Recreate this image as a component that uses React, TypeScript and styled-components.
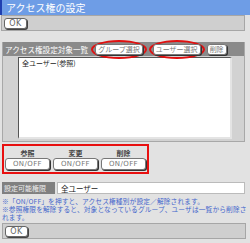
import * as React from 'react';
import styled, { createGlobalStyle } from 'styled-components';

const GlobalStyle = createGlobalStyle`
  *, *::before, *::after {
    box-sizing: border-box;
  }
  html, body {
    margin: 0;
    padding: 0;
    background: #e2e2e2;
  }
  body {
    font-family: "Noto Sans CJK JP", "Noto Sans", sans-serif;
    color: #222;
  }
`;

const Page = styled.div`
  width: 250px;
  height: 243px;
  overflow: hidden;
  display: flex;
  flex-direction: column;
`;

const TitleBar = styled.div`
  height: 15px;
  flex: none;
  display: flex;
  align-items: center;
  padding-left: 4px;
  background: #6e9de6;
  border-left: 2px solid #1f3fb0;
  color: #fff;
  font-size: 10px;
  line-height: 15px;
`;

const ButtonBar = styled.div<{ $top?: number; $left?: number }>`
  width: 244px;
  flex: none;
  margin-left: ${(p) => p.$left ?? 1}px;
  margin-top: ${(p) => p.$top ?? 0}px;
  height: 16px;
  display: flex;
  align-items: center;
  padding-left: 2px;
  background: #cfcfcf;
  border: 1px solid #a6a6a6;
`;

const OkButton = styled.button`
  width: 23px;
  height: 11px;
  padding: 0;
  background: #fff;
  border: 1px solid #666;
  border-radius: 3px;
  box-shadow: 1px 1px 0 #444;
  font-family: "DejaVu Sans", sans-serif;
  font-size: 8px;
  line-height: 9px;
  letter-spacing: 0.5px;
  color: #666;
`;

const Panel = styled.div`
  width: 243px;
  flex: none;
  margin: 11px 0 0 2px;
  padding-bottom: 2px;
  background: #d2d2d2;
  border-left: 1px solid #a8a8a8;
  border-right: 1px solid #a8a8a8;
  border-bottom: 1px solid #a8a8a8;
`;

const PanelHeader = styled.div`
  height: 14px;
  display: flex;
  align-items: center;
  gap: 2px;
  padding-left: 2px;
  background: #8a8a8a;
  color: #fff;
  font-size: 7.6px;
  white-space: nowrap;
`;

const HeaderTitle = styled.span`
  margin-right: 1px;
`;

const Circled = styled.span`
  display: inline-flex;
  align-items: center;
  justify-content: center;
  height: 19px;
  padding: 0 2px;
  border: 2px solid #e01010;
  border-radius: 50%;
`;

const SmallButton = styled.button`
  height: 11px;
  padding: 0 2px;
  background: #fff;
  border: 1px solid #777;
  border-radius: 3px;
  box-shadow: 1px 1px 0 #333;
  font-family: "Noto Sans CJK JP", sans-serif;
  font-size: 7px;
  line-height: 9px;
  color: #777;
  white-space: nowrap;
`;

const ListBox = styled.div`
  margin: 1px 12px 0 15px;
  height: 82px;
  background: #fff;
  border-left: 1px solid #555;
  border-top: 1px solid #555;
  border-right: 2px solid #e4e4e4;
  border-bottom: 2px solid #e4e4e4;
  padding: 1px 3px;
  font-size: 7px;
  line-height: 9px;
`;

const RedBox = styled.div`
  width: 147px;
  flex: none;
  margin: 2px 0 0 2px;
  height: 30px;
  border: 2px solid #e81010;
  display: flex;
  gap: 3px;
  padding: 2px 1px;
`;

const Permission = styled.div`
  display: flex;
  flex-direction: column;
  align-items: center;
`;

const PermLabel = styled.span`
  font-size: 7px;
  line-height: 10px;
  font-weight: 700;
  color: #444;
`;

const ToggleButton = styled.button`
  width: 45px;
  height: 12px;
  padding: 0;
  background: #fff;
  border: 1px solid #777;
  border-radius: 3px;
  box-shadow: 1px 1px 0 #333;
  font-family: "DejaVu Sans", sans-serif;
  font-size: 7px;
  line-height: 10px;
  letter-spacing: 0.4px;
  color: #777;
`;

const SettingRow = styled.div`
  display: flex;
  flex: none;
  margin: 8px 0 0 2px;
  gap: 2px;
  height: 12px;
`;

const SettingLabel = styled.div`
  width: 53px;
  display: flex;
  align-items: center;
  padding-left: 2px;
  background: #808080;
  color: #eee;
  font-size: 7px;
`;

const SettingValue = styled.div`
  width: 188px;
  display: flex;
  align-items: center;
  padding-left: 3px;
  background: #fff;
  border: 1px solid #bbb;
  font-size: 7.5px;
`;

const Notes = styled.div`
  flex: none;
  display: flex;
  flex-direction: column;
  margin: 3px 0 0 2px;
  color: #4466cc;
  font-size: 6.7px;
  letter-spacing: 0.15px;
`;

const NoteLine = styled.div`
  height: 8px;
  line-height: 8px;
  white-space: nowrap;
`;

const noteLines = [
  '※「ON/OFF」を押すと、アクセス権種別が設定／解除されます。',
  '※参照権限を解除すると、対象となっているグループ、ユーザは一覧から削除さ',
  'れます。',
];

const perms = ['参照', '変更', '削除'];

export default function App() {
  return (
    <Page>
      <GlobalStyle />
      <TitleBar>アクセス権の設定</TitleBar>
      <ButtonBar>
        <OkButton>OK</OkButton>
      </ButtonBar>
      <Panel>
        <PanelHeader>
          <HeaderTitle>アクセス権設定対象一覧</HeaderTitle>
          <Circled>
            <SmallButton>グループ選択</SmallButton>
          </Circled>
          <Circled>
            <SmallButton>ユーザー選択</SmallButton>
          </Circled>
          <SmallButton>削除</SmallButton>
        </PanelHeader>
        <ListBox>全ユーザー(参照)</ListBox>
      </Panel>
      <RedBox>
        {perms.map((p) => (
          <Permission key={p}>
            <PermLabel>{p}</PermLabel>
            <ToggleButton>ON/OFF</ToggleButton>
          </Permission>
        ))}
      </RedBox>
      <SettingRow>
        <SettingLabel>設定可能権限</SettingLabel>
        <SettingValue>全ユーザー</SettingValue>
      </SettingRow>
      <Notes>
        {noteLines.map((line) => (
          <NoteLine key={line}>{line}</NoteLine>
        ))}
      </Notes>
      <ButtonBar $top={2} $left={2}>
        <OkButton>OK</OkButton>
      </ButtonBar>
    </Page>
  );
}
